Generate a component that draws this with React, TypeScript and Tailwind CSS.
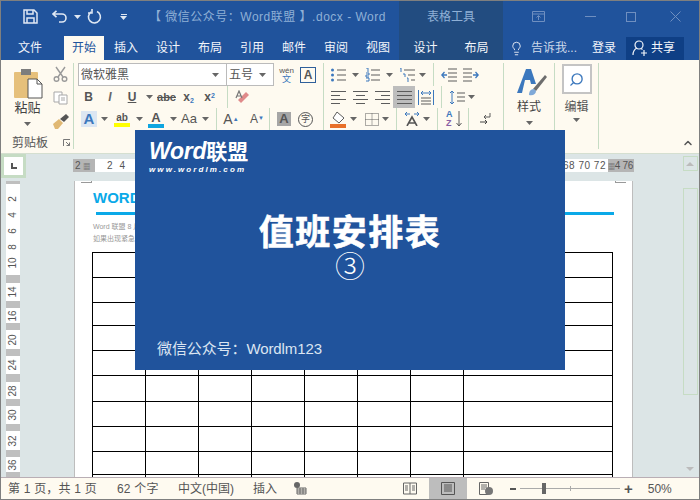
import React from 'react';
import { Lightbulb, Search, ChevronUp } from 'lucide-react';

const GRAY = '#5c5c5c';
const BLUE = '#3c78bd';

const TABS = ['插入', '设计', '布局', '引用', '邮件', '审阅', '视图'];
const RULER_V: { h: string; gray?: boolean; labels?: string[]; pad?: string }[] = [
  { h: 'h-[3px]', gray: true },
  { h: 'h-[91px]', labels: ['2', '4', '6', '8', '10'], pad: 'pt-[7px] pb-[4px]' },
  { h: 'h-[8px]', gray: true },
  { h: 'h-[18px]', labels: ['14'] },
  { h: 'h-[7px]', gray: true },
  { h: 'h-[15px]', labels: ['16'] },
  { h: 'h-[7px]', gray: true },
  { h: 'h-[19px]', labels: ['20'] },
  { h: 'h-[7px]', gray: true },
  { h: 'h-[18px]', labels: ['24'] },
  { h: 'h-[8px]', gray: true },
  { h: 'h-[17px]', labels: ['28'] },
  { h: 'h-[7px]', gray: true },
  { h: 'h-[18px]', labels: ['30'] },
  { h: 'h-[7px]', gray: true },
  { h: 'h-[19px]', labels: ['32'] },
  { h: 'h-[7px]', gray: true },
  { h: 'h-[15px]', labels: ['36'] },
  { h: 'h-[5px]', gray: true },
];
const ROW_H = ['h-[25px]', 'h-[25px]', 'h-[23px]', 'h-[25px]', 'h-[25px]', 'h-[26px]', 'h-[25px]', 'h-[25px]', 'h-[23px]', 'h-[25px]'];

function Caret({ color = '#666' }: { color?: string }) {
  return (
    <svg width="7" height="4" viewBox="0 0 7 4" className="shrink-0">
      <path d="M0 0h7L3.5 4z" fill={color} />
    </svg>
  );
}

function Lines({ widths, w = 15, color = GRAY }: { widths: [number, number][]; w?: number; color?: string }) {
  return (
    <svg width={w} height="14" viewBox={`0 0 ${w} 14`} className="shrink-0">
      {widths.map(([x, len], i) => (
        <rect key={i} x={x} y={1 + (i * 12) / (widths.length - 1)} width={len} height="1" fill={color} />
      ))}
    </svg>
  );
}

function Sep() {
  return <div className="w-px self-stretch bg-[#c6dcc4] shrink-0" />;
}

function ClipboardGroup() {
  return (
    <div className="w-[72px] shrink-0 flex flex-col">
      <div className="flex flex-1">
        <div className="w-[50px] flex flex-col items-center pt-[5px] pl-[3px]">
          <svg width="30" height="31" viewBox="0 0 30 31">
            <rect x="1" y="4" width="24" height="26" rx="1" fill="#e6c07b" />
            <rect x="8" y="1" width="10" height="6" fill="#7d7d7d" />
            <path d="M15 11h9l5 5v14H15z" fill="#fff" stroke="#555" />
            <path d="M24 11v5h5" fill="none" stroke="#555" />
          </svg>
          <span className="text-[13px] leading-[16px] mt-[1px] text-[#444]">粘贴</span>
          <div className="mt-[6px]"><Caret /></div>
        </div>
        <div className="flex flex-col items-center pt-[3px] gap-[9px] w-[18px]">
          <svg width="15" height="16" viewBox="0 0 15 16" fill="none" stroke="#9a9a9a" strokeWidth="1.4">
            <path d="M3 1l7 10M12 1L5 11" />
            <circle cx="3.5" cy="13" r="2.3" />
            <circle cx="11.5" cy="13" r="2.3" />
          </svg>
          <svg width="15" height="14" viewBox="0 0 15 14" fill="#fff" stroke="#a8a8a8">
            <path d="M1 1h8v10H1z" />
            <path d="M6 4h8v9H6z" />
            <path d="M8 7h4M8 9h4" />
          </svg>
          <svg width="17" height="15" viewBox="0 0 17 15">
            <path d="M1 10l6-5 4 4-5 6H3z" fill="#e0b873" />
            <path d="M8 5l6-5 3 3-5 5z" fill="#555" />
          </svg>
        </div>
      </div>
      <div className="h-[14px] flex items-start pl-[11px] text-[12px] leading-[16px] text-[#555]">
        剪贴板
        <svg width="7" height="7" viewBox="0 0 7 7" className="ml-[15px] mt-[4px]" fill="none" stroke="#777">
          <path d="M.5 7V.5H7M3 3l3.5 3.5M3.5 6.5h3v-3" />
        </svg>
      </div>
    </div>
  );
}

function FontGroup() {
  return (
    <div className="w-[249px] shrink-0 flex flex-col pl-[4px]">
      <div className="flex items-center h-[23px]">
        <div className="w-[149px] h-[23px] border border-[#bbb] bg-white flex items-center justify-between pl-[2px] pr-[7px] text-[12px] text-[#555]">
          微软雅黑 <Caret />
        </div>
        <div className="w-[47px] h-[23px] border border-l-0 border-[#bbb] bg-white flex items-center justify-between pl-[2px] pr-[7px] text-[12px] text-[#555]">
          五号 <Caret />
        </div>
        <div className="w-[25px] flex flex-col items-center leading-none">
          <span className="text-[8px] leading-[9px] text-[#555]">wén</span>
          <span className="text-[9px] leading-[9px] text-[#3c78bd]">文</span>
        </div>
        <div className="ml-[1px] w-[16px] h-[16px] border border-[#2f5f9a] flex items-center justify-center text-[12px] font-bold text-[#555]">A</div>
      </div>
      <div className="flex items-center h-[22px] text-[#555]">
        <span className="w-[21px] text-center text-[12px] font-bold">B</span>
        <span className="w-[22px] text-center text-[12px] italic font-bold text-[#666]">I</span>
        <span className="w-[22px] text-center text-[12px] font-bold underline">U</span>
        <span className="w-[12px] flex justify-center"><Caret /></span>
        <span className="w-[23px] text-center text-[11px] font-bold line-through">abc</span>
        <span className="w-[21px] text-center text-[12px] font-bold">x<sub className="text-[7px] text-[#3c78bd]">2</sub></span>
        <span className="w-[21px] text-center text-[12px] font-bold">x<sup className="text-[7px] text-[#3c78bd]">2</sup></span>
        <span className="w-[7px]" />
        <Sep />
        <span className="w-[30px] flex justify-center">
          <svg width="16" height="15" viewBox="0 0 16 15">
            <path d="M6 13l8-8-3-3-8 8z" fill="#e08a8a" />
            <path d="M1 8l3-7 3 7M2.200 6h3.600" fill="none" stroke="#777" strokeWidth="1.2" />
          </svg>
        </span>
      </div>
      <div className="flex items-center h-[22px] text-[#555]">
        <span className="w-[22px] flex justify-center">
          <span className="w-[16px] h-[16px] bg-[#dce6f2] text-center text-[15px] leading-[16px] font-bold text-[#3c78bd]">A</span>
        </span>
        <span className="w-[8px] flex justify-center"><Caret /></span>
        <span className="w-[28px] flex flex-col items-center">
          <span className="text-[10px] leading-[11px] font-bold">ab</span>
          <span className="w-[16px] h-[4px] bg-[#ffff00]" />
        </span>
        <span className="w-[6px] flex justify-center"><Caret /></span>
        <span className="w-[28px] flex flex-col items-center">
          <span className="text-[13px] leading-[13px] font-bold">A</span>
          <span className="w-[16px] h-[4px] bg-[#0ea5e0]" />
        </span>
        <span className="w-[6px] flex justify-center"><Caret /></span>
        <span className="w-[26px] text-center text-[13px]">Aa</span>
        <span className="w-[6px] flex justify-center"><Caret /></span>
        <span className="w-[8px]" />
        <Sep />
        <span className="w-[28px] text-center text-[14px]">A<sup className="text-[6px] text-[#3c78bd]">▲</sup></span>
        <span className="w-[24px] text-center text-[12px]">A<sup className="text-[6px] text-[#3c78bd]">▼</sup></span>
        <Sep />
        <span className="w-[28px] flex justify-center">
          <span className="w-[14px] h-[14px] bg-[#a6a6a6] text-center text-[13px] leading-[14px] font-bold">A</span>
        </span>
        <span className="w-[15px] h-[15px] rounded-full border border-[#555] text-center text-[9px] leading-[13px]">字</span>
      </div>
    </div>
  );
}

function ParagraphGroup() {
  const bullet = (
    <svg width="15" height="14" viewBox="0 0 15 14">
      <g fill={BLUE}>
        <circle cx="1.5" cy="2" r="1.5" />
        <circle cx="1.5" cy="7" r="1.5" />
        <circle cx="1.5" cy="12" r="1.5" />
      </g>
      <path d="M6 2h9M6 7h9M6 12h9" stroke={GRAY} />
    </svg>
  );
  const numbered = (
    <svg width="15" height="14" viewBox="0 0 15 14">
      <path d="M1 0h2v4M1 5h3v2H1v2h3M1 10h3v3H1" fill="none" stroke={BLUE} />
      <path d="M6 2h9M6 7h9M6 12h9" stroke={GRAY} />
    </svg>
  );
  const multi = (
    <svg width="17" height="14" viewBox="0 0 17 14">
      <path d="M1 0h1v4M4 6h2v3M8 10h1v4" fill="none" stroke={BLUE} />
      <path d="M5 2h11M9 7h7M12 12h4" stroke={GRAY} />
    </svg>
  );
  const indent = (flip: boolean) => (
    <svg width="16" height="14" viewBox="0 0 16 14" className={flip ? '-scale-x-100' : ''}>
      <path d="M7 1h9M7 5h9M7 9h9M7 13h9" stroke={GRAY} />
      <path d="M6 7H1M3.500 4L.8 7l2.700 3" fill="none" stroke={BLUE} strokeWidth="1.3" />
    </svg>
  );
  return (
    <div className="w-[179px] shrink-0 flex flex-col">
      <div className="flex items-center h-[23px]">
        <span className="w-[7px]" />
        {bullet}
        <span className="w-[19px] flex justify-center"><Caret /></span>
        {numbered}
        <span className="w-[19px] flex justify-center"><Caret /></span>
        {multi}
        <span className="w-[12px] flex justify-center"><Caret /></span>
        <span className="w-[5px]" />
        <Sep />
        <span className="w-[7px]" />
        {indent(false)}
        <span className="w-[6px]" />
        {indent(true)}
      </div>
      <div className="flex items-center h-[22px]">
        <span className="w-[7px]" />
        <Lines widths={[[0, 15], [0, 9], [0, 15], [0, 9]]} />
        <span className="w-[7px]" />
        <Lines widths={[[0, 15], [3, 9], [0, 15], [3, 9]]} />
        <span className="w-[7px]" />
        <Lines widths={[[0, 15], [6, 9], [0, 15], [6, 9]]} />
        <span className="ml-[3px] w-[22px] h-[22px] bg-[#bdbdbd] flex items-center justify-center">
          <Lines widths={[[0, 15], [0, 15], [0, 15], [0, 15]]} />
        </span>
        <span className="w-[3px]" />
        <svg width="16" height="15" viewBox="0 0 16 15">
          <path d="M.5 0v15M15.500 0v15" stroke={BLUE} />
          <path d="M3 3h10M5 1L3 3l2 2M11 1l2 2-2 2" fill="none" stroke={BLUE} />
          <path d="M3 8h10M3 11h10M3 14h10" stroke={GRAY} />
        </svg>
        <span className="w-[7px]" />
        <Sep />
        <span className="w-[7px]" />
        <svg width="16" height="15" viewBox="0 0 16 15">
          <path d="M3 1v13M1 3l2-2 2 2M1 12l2 2 2-2" fill="none" stroke={BLUE} />
          <path d="M8 3h8M8 7h8M8 11h8" stroke={GRAY} />
        </svg>
        <span className="w-[12px] flex justify-center"><Caret /></span>
      </div>
      <div className="flex items-center h-[22px]">
        <span className="w-[6px]" />
        <svg width="17" height="17" viewBox="0 0 17 17">
          <path d="M7 1l7 6-5 5-6-5z" fill="#fff" stroke={GRAY} />
          <rect x="0" y="13" width="16" height="4" fill="#e8702a" />
        </svg>
        <span className="w-[13px] flex justify-center"><Caret /></span>
        <span className="w-[5px]" />
        <svg width="14" height="13" viewBox="0 0 14 13" fill="none" stroke={GRAY} strokeDasharray="1 1">
          <path d="M.5.500h13v12H.5zM7 .5v12M.5 6.500h13" />
        </svg>
        <span className="w-[13px] flex justify-center"><Caret /></span>
        <span className="w-[4px]" />
        <Sep />
        <span className="w-[7px]" />
        <svg width="16" height="14" viewBox="0 0 16 14">
          <path d="M1 2h5M10 2h5M3 0L1 2l2 2M13 0l2 2-2 2" fill="none" stroke={BLUE} />
          <path d="M3 14l5-9 5 9M5 11h6" fill="none" stroke="#555" strokeWidth="1.6" />
        </svg>
        <span className="w-[13px] flex justify-center"><Caret /></span>
        <span className="w-[4px]" />
        <Sep />
        <span className="w-[8px]" />
        <span className="w-[10px] flex flex-col text-[9px] leading-[9px] font-bold">
          <span className="text-[#3c78bd]">A</span>
          <span className="text-[#8a5fa5]">Z</span>
        </span>
        <svg width="6" height="16" viewBox="0 0 6 16" fill="none" stroke={GRAY}>
          <path d="M3 0v15M.5 12L3 15l2.500-3" />
        </svg>
        <span className="w-[6px]" />
        <Sep />
        <span className="w-[10px]" />
        <svg width="12" height="14" viewBox="0 0 12 14" fill="none" stroke={GRAY}>
          <path d="M11 1v4H5M7 3L5 5l2 2" />
          <path d="M1 10h7M6 8l2 2-2 2" stroke="#444" />
        </svg>
      </div>
    </div>
  );
}

function Ribbon() {
  return (
    <div className="h-[93px] bg-[#fefaf0] flex pt-[3px] pb-[4px] relative shrink-0">
      <ClipboardGroup />
      <Sep />
      <FontGroup />
      <Sep />
      <ParagraphGroup />
      <Sep />
      <div className="w-[50px] flex flex-col items-center pt-[4px] pl-[6px] shrink-0">
        <svg width="30" height="30" viewBox="0 0 30 30">
          <path d="M0 26L9 2h5l5 15h-5l-1-4H8l-3 13z" fill={BLUE} />
          <path d="M16 22l12-14 2 2-11 14z" fill="#6d6d6d" />
          <path d="M12 28c0-4 2-6 5-6l2 2c0 3-3 5-7 4z" fill="#7fa9d8" />
        </svg>
        <span className="text-[12px] leading-[16px] mt-[2px] -ml-[6px] text-[#444]">样式</span>
        <div className="mt-[6px] -ml-[6px]"><Caret /></div>
      </div>
      <Sep />
      <div className="w-[43px] flex flex-col items-center shrink-0 pt-[1px]">
        <div className="w-[30px] h-[30px] border-2 border-[#c4c4c4] bg-white flex items-center justify-center">
          <Search size={15} color={BLUE} strokeWidth={2.2} className="-scale-x-100" />
        </div>
        <span className="text-[12px] leading-[16px] mt-[5px] text-[#555]">编辑</span>
        <div className="mt-[3px]"><Caret /></div>
      </div>
      <Sep />
      <div className="flex-1 flex items-end justify-end pr-[5px]">
        <ChevronUp size={12} color="#555" strokeWidth={3} />
      </div>
    </div>
  );
}

function Header() {
  return (
    <div className="h-[59px] bg-[#20539c] flex shrink-0 text-white">
      <div className="w-[398px] flex flex-col">
        <div className="h-[35px] flex items-center pl-[22px] pb-[4px]">
          <svg width="15" height="15" viewBox="0 0 15 15" fill="none" stroke="#dfe8f3" strokeWidth="1.5">
            <path d="M1 1h10l3 3v10H1z" />
            <path d="M4 1v4h6V1M4 14V9h7v5" />
          </svg>
          <svg width="16" height="13" viewBox="0 0 16 13" fill="none" stroke="#dfe8f3" strokeWidth="1.6" className="ml-[14px]">
            <path d="M1 4h9a4 4 0 0 1 0 8H7M4.500.8L1 4l3.500 3.200" />
          </svg>
          <div className="ml-[6px]"><Caret color="#dfe8f3" /></div>
          <svg width="15" height="15" viewBox="0 0 15 15" fill="none" stroke="#dfe8f3" strokeWidth="1.6" className="ml-[6px]">
            <path d="M4 3a6 6 0 1 0 6-.5M5 0v4H1" />
          </svg>
          <div className="ml-[18px] flex flex-col items-center gap-[1px]">
            <div className="w-[6px] h-px bg-[#dfe8f3]" />
            <Caret color="#dfe8f3" />
          </div>
          <span className="ml-[22px] text-[12px] tracking-[0.5px] text-[#8fb0d6] whitespace-nowrap">【 微信公众号：Word联盟 】.docx - Word</span>
        </div>
        <div className="h-[24px] flex items-center text-[12px]">
          <span className="w-[63px] pl-[17px] text-[#f2f5fa]">文件</span>
          <span className="w-[40px] h-[24px] bg-[#fefaf0] text-[#20539c] flex items-center justify-center">开始</span>
          <div className="flex ml-[10px] gap-[18px]">
            {TABS.map((t) => (
              <span key={t} className="w-[24px] text-[#f2f5fa]">{t}</span>
            ))}
          </div>
        </div>
      </div>
      <div className="w-[104px] bg-[#224c80] flex flex-col">
        <div className="h-[35px] flex items-center justify-center pb-[4px] text-[12px] text-[#8fb0d6]">表格工具</div>
        <div className="h-[24px] flex items-center justify-around text-[12px] text-[#f2f5fa] px-[1px]">
          <span>设计</span>
          <span>布局</span>
        </div>
      </div>
      <div className="flex-1 flex flex-col">
        <div className="h-[35px] flex items-center pl-[29px] pb-[4px]">
          <svg width="13" height="11" viewBox="0 0 13 11" fill="none" stroke="#6f8fc0">
            <path d="M.5.500h12v10H.5zM.5 3h12M6.500 9V5M4.500 6.500l2-2 2 2" />
          </svg>
          <div className="ml-[40px] w-[11px] h-px bg-[#6f8fc0]" />
          <div className="ml-[30px] w-[10px] h-[10px] border border-[#6f8fc0]" />
          <svg width="11" height="11" viewBox="0 0 11 11" stroke="#6f8fc0" className="ml-[34px]">
            <path d="M.5.500l10 10M10.500.500l-10 10" />
          </svg>
        </div>
        <div className="h-[24px] flex items-center text-[12px] text-[#f2f5fa]">
          <Lightbulb size={15} className="ml-[6px]" strokeWidth={1.4} />
          <span className="ml-[7px] text-[#cdd9ea] whitespace-nowrap">告诉我...</span>
          <span className="ml-[15px]">登录</span>
          <div className="ml-[10px] w-[58px] h-[23px] bg-[#0f3f85] flex items-center pl-[6px] gap-[3px]">
            <svg width="16" height="16" viewBox="0 0 16 16" fill="none" stroke="#f2f5fa" strokeWidth="1.2">
              <circle cx="7" cy="5" r="4" />
              <path d="M1 15c0-4 2-6 4-7M9 8.500l1.500 1M9 13h6M12 10v6" />
            </svg>
            <span>共享</span>
          </div>
        </div>
      </div>
    </div>
  );
}

function TopRuler() {
  return (
    <div className="h-[27px] flex items-start shrink-0">
      <div className="w-[25px] h-[24px] border-[3px] border-[#c6dcc4] bg-white flex items-center justify-center">
        <div className="w-[6px] h-[6px] border-l-2 border-b-2 border-[#555]" />
      </div>
      <div className="ml-[47px] mt-[5px] h-[13px] flex text-[10px] leading-[13px] text-[#555]">
        <div className="w-[22px] bg-[#b5b5b5] pl-[2px] whitespace-nowrap">2 <span className="text-[7px]">▦</span></div>
        <div className="w-[513px] bg-white flex justify-between pl-[12px] pr-[2px] tracking-[0.5px]">
          <span>2&nbsp;&nbsp;4</span>
          <span>68 70 72</span>
        </div>
        <div className="w-[26px] bg-[#b5b5b5] whitespace-nowrap tracking-[-0.3px]"><span className="text-[7px]">▦</span>4 76</div>
      </div>
    </div>
  );
}

function LeftRuler() {
  return (
    <div className="ml-[5px] w-[14px] flex flex-col shrink-0 text-[10px] text-[#555]">
      {RULER_V.map((s, i) => (
        <div key={i} className={`${s.h} ${s.pad ?? ''} ${s.gray ? 'bg-[#bfbfbf]' : 'bg-white'} flex flex-col items-center justify-around shrink-0`}>
          {s.labels?.map((l) => (
            <span key={l} className="-rotate-90 leading-[10px]">{l}</span>
          ))}
        </div>
      ))}
    </div>
  );
}

function Page() {
  return (
    <div className="ml-[54px] w-[559px] border-x border-[#bdbdbd] bg-white flex flex-col shrink-0 overflow-hidden relative">
      <div className="flex justify-between px-[6px]">
        <div className="w-[11px] h-[2px] border-b border-r border-[#999]" />
        <div className="w-[11px] h-[2px] border-b border-l border-[#999]" />
      </div>
      <div className="pl-[18px] h-[30px] pt-[5px] mb-[4px] text-[15px] leading-[20px] font-bold text-[#0aa9e8]">WORD</div>
      <div className="ml-[21px] w-[518px] h-[3px] bg-[#0aa9e8] shrink-0" />
      <div className="pl-[18px] mt-[6px] text-[7px] leading-[12px] text-[#999]">
        <div>Word 联盟 8 月</div>
        <div>如果出现紧急</div>
      </div>
      <div className="ml-[17px] mt-[7px] w-[521px] border-t border-l border-black grid grid-cols-[53px_53px_53px_53px_53px_53px_53px_149px] shrink-0">
        {ROW_H.map((h, r) =>
          Array.from({ length: 8 }, (_, c) => (
            <div key={`${r}-${c}`} className={`${h} border-r border-b border-black`} />
          ))
        )}
      </div>
    </div>
  );
}

function Scrollbar() {
  return (
    <div className="w-[16px] shrink-0 mr-[1px] flex flex-col pt-[2px] items-center">
      <div className="w-[15px] h-[15px] border border-[#c6dcc4] flex items-center justify-center">
        <div className="w-0 h-0 border-x-[4px] border-b-[4px] border-x-transparent border-b-[#bbb]" />
      </div>
      <div className="mt-[17px] w-[15px] h-[207px] border border-[#c6dcc4]" />
      <div className="flex-1 flex items-end pb-[6px]">
        <div className="w-0 h-0 border-x-[4px] border-t-[4px] border-x-transparent border-t-[#bbb]" />
      </div>
    </div>
  );
}

function StatusBar() {
  return (
    <div className="h-[22px] border-t border-[#b9aeb4] bg-[#fefaf0] flex items-center text-[12px] text-[#555] shrink-0">
      <span className="ml-[7px] w-[109px] tracking-[0.2px]">第 1 页，共 1 页</span>
      <span className="w-[61px] tracking-[0.2px]">62 个字</span>
      <span className="w-[75px]">中文(中国)</span>
      <span className="w-[41px]">插入</span>
      <svg width="13" height="13" viewBox="0 0 13 13">
        <circle cx="3" cy="3" r="3" fill="#666" />
        <path d="M3 6h9v6H3zM3 8h9M3 10h9M6 6v6M9 6v6" fill="none" stroke="#666" />
      </svg>
      <svg width="14" height="13" viewBox="0 0 14 13" fill="none" stroke="#666" className="ml-[96px]">
        <path d="M.5 1h13v11H.5zM7 1v11M2 4h3M2 6h3M2 8h3M9 4h3M9 6h3M9 8h3" />
      </svg>
      <div className="ml-[12px] w-[38px] h-[21px] bg-[#bdbdbd] flex items-center justify-center">
        <svg width="14" height="13" viewBox="0 0 14 13" fill="none" stroke="#555">
          <path d="M.5.500h13v12H.5zM3 3h8M3 5h8M3 7h8M3 9h8" />
        </svg>
      </div>
      <svg width="14" height="13" viewBox="0 0 14 13" className="ml-[12px]">
        <path d="M.5.500h9v12H.5zM2 3h6M2 5h6M2 7h4" fill="none" stroke="#666" />
        <circle cx="10" cy="9" r="4" fill="#777" />
      </svg>
      <span className="ml-[17px] w-[6px] h-[2px] bg-[#555]" />
      <div className="ml-[4px] w-[100px] h-px bg-[#aaa] flex items-center">
        <span className="ml-[22px] w-[4px] h-[11px] bg-[#666]" />
        <span className="ml-[24px] w-px h-[5px] bg-[#aaa]" />
      </div>
      <span className="ml-[4px] text-[15px] leading-none font-bold">+</span>
      <span className="ml-[15px]">50%</span>
    </div>
  );
}

export default function App() {
  return (
    <div className="w-[700px] h-[500px] relative overflow-hidden border border-[#7f7f7f] flex flex-col bg-[#dce5e6] [font-family:'Liberation_Sans','Noto_Sans_CJK_SC',sans-serif]">
      <Header />
      <Ribbon />
      <div className="flex flex-1 min-h-0 border-t border-[#d5dfd0]">
        <div className="flex-1 flex flex-col min-w-0">
          <TopRuler />
          <div className="flex flex-1 min-h-0">
            <LeftRuler />
            <Page />
          </div>
        </div>
        <Scrollbar />
      </div>
      <StatusBar />

      <div className="absolute left-[134px] top-[129px] w-[430px] h-[240px] bg-[#20539c] text-white flex flex-col">
        <div className="pl-[14px] pt-[8px]">
          <div className="text-[23px] leading-[26px] font-bold whitespace-nowrap">
            <span className="italic tracking-[-0.3px]">Word</span>
            <span className="text-[21px]">联盟</span>
          </div>
          <div className="text-[8px] leading-[9px] font-bold italic tracking-[2.1px]">www.wordlm.com</div>
        </div>
        <div className="flex flex-col items-center mt-[39px]">
          <div className="text-[35px] leading-[40px] font-bold tracking-[1.5px] [-webkit-text-stroke:0.6px_white]">值班安排表</div>
          <div className="text-[30px] leading-[32px] -mt-[2px] font-light">③</div>
        </div>
        <div className="mt-auto pl-[22px] pb-[11px] text-[15px] leading-[20px] tracking-[-0.1px] text-[#dbe5f2]">微信公众号：Wordlm123</div>
      </div>
    </div>
  );
}
